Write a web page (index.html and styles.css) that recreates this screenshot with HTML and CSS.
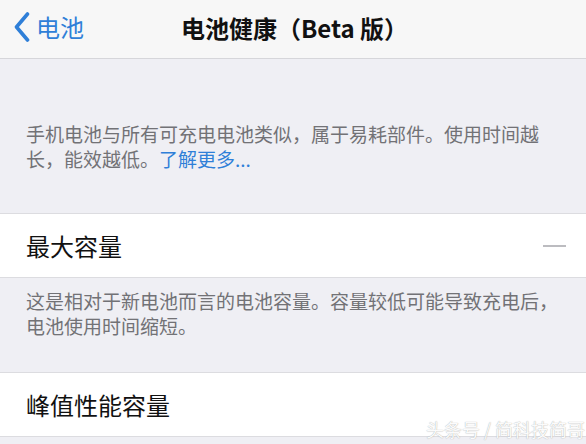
FILE: index.html
```html
<!DOCTYPE html>
<html lang="zh-CN">
<head>
<meta charset="utf-8">
<link rel="stylesheet" href="styles.css">
</head>
<body>
<div class="page">
  <header class="nav">
    <div class="back">
      <svg class="chev" width="18" height="30" viewBox="0 0 18 30"><path d="M14.5 2 L3.5 15 L14.5 28" fill="none" stroke="#2f7fd8" stroke-width="3.6" stroke-linecap="round" stroke-linejoin="round"/></svg>
      <span>电池</span>
    </div>
    <div class="title">电池健康（Beta 版）</div>
  </header>
  <p class="note intro">手机电池与所有可充电电池类似，属于易耗部件。使用时间越<br>长，能效越低。<span class="link">了解更多...</span></p>
  <div class="cell">
    <span class="label">最大容量</span>
    <span class="dash"></span>
  </div>
  <p class="note foot">这是相对于新电池而言的电池容量。容量较低可能导致充电后，<br>电池使用时间缩短。</p>
  <div class="cell cell2">
    <span class="label">峰值性能容量</span>
  </div>
  <div class="watermark">头条号 / 简科技简哥</div>
</div>
</body>
</html>
```

FILE: styles.css
```css
* { box-sizing: border-box; }
html, body { margin: 0; padding: 0; }
body {
  width: 586px;
  height: 444px;
  overflow: hidden;
  background: #efeff4;
  font-family: "Noto Sans CJK SC", "Noto Sans", sans-serif;
}
.page {
  position: relative;
  height: 444px;
  display: flex;
  flex-direction: column;
}
.nav {
  position: relative;
  height: 59px;
  background: #f7f7f7;
  border-bottom: 1px solid #d6d6da;
  display: flex;
  align-items: center;
  padding-left: 13px;
  padding-bottom: 4px;
}
.back {
  display: flex;
  align-items: center;
  gap: 5px;
  color: #2f7fd8;
  font-size: 24px;
  line-height: 30px;
}
.chev { display: block; }
.title {
  position: absolute;
  left: 3px;
  right: 0;
  top: 0;
  bottom: 4px;
  display: flex;
  align-items: center;
  justify-content: center;
  font-size: 24px;
  font-weight: 600;
  color: #111;
  pointer-events: none;
}
.note {
  margin: 0;
  padding: 0 26px;
  font-size: 19px;
  line-height: 25px;
  color: #727276;
  white-space: nowrap;
}
.intro { margin-top: 62px; }
.link { color: #2f7fd8; }
.cell {
  height: 65px;
  background: #fff;
  border-top: 1px solid #dcdce0;
  border-bottom: 1px solid #dcdce0;
  display: flex;
  align-items: center;
  justify-content: space-between;
  padding: 0 20px 0 26px;
  margin-top: 42px;
}
.label {
  font-size: 24px;
  color: #111;
  line-height: 30px;
}
.dash {
  width: 23px;
  height: 2px;
  background: #bcbcc0;
}
.foot { margin-top: 10px; }
.cell2 { margin-top: 34px; }
.watermark {
  position: absolute;
  left: 426px;
  top: 417px;
  font-size: 18px;
  line-height: 24px;
  color: #fbfbfb;
  text-shadow: 0 0 1px #999;
  white-space: nowrap;
}
```
